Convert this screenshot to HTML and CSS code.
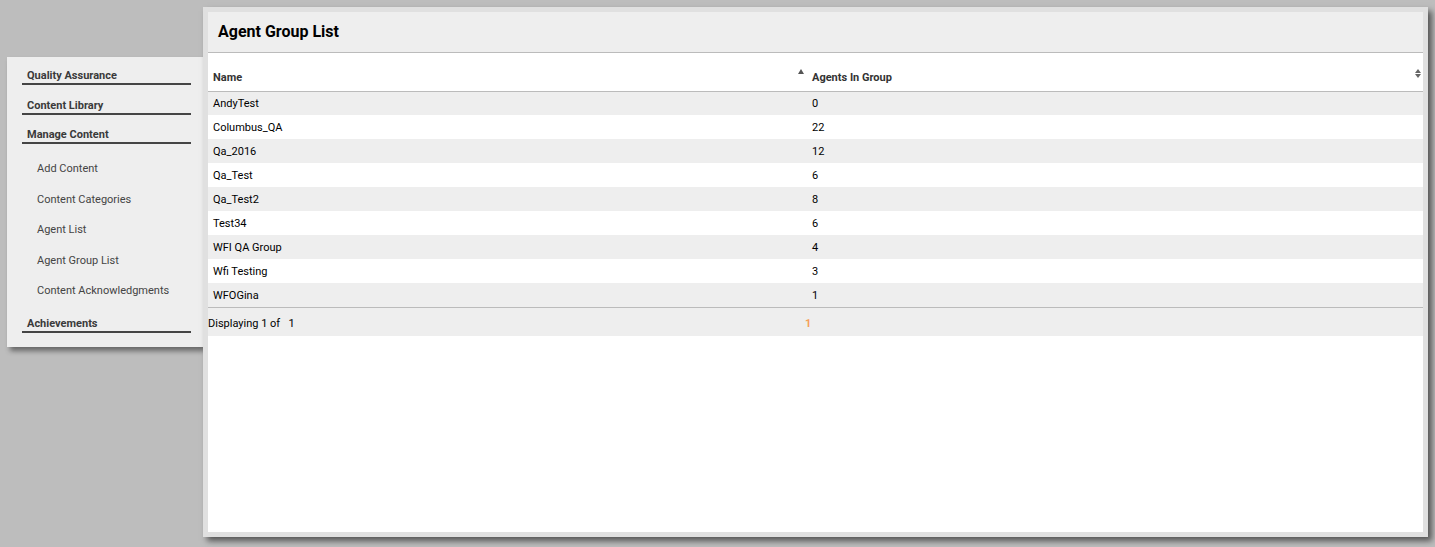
FILE: index.html
```html
<!DOCTYPE html>
<html lang="en">
<head>
    <meta charset="UTF-8">
    <title>Agent Group List</title>
    <link rel="stylesheet" href="styles.css">
</head>
<body>
    <div class="page">
        <!-- left menu -->
        <div class="sidebar">
            <div class="nav-head">Quality Assurance</div>
            <div class="nav-head">Content Library</div>
            <div class="nav-head">Manage Content</div>
            <div class="nav-items">
                <div class="nav-item">Add Content</div>
                <div class="nav-item">Content Categories</div>
                <div class="nav-item">Agent List</div>
                <div class="nav-item">Agent Group List</div>
                <div class="nav-item">Content Acknowledgments</div>
            </div>
            <div class="nav-head nav-last">Achievements</div>
        </div>

        <!-- main panel -->
        <div class="panel">
            <div class="panel-inner">
                <div class="panel-title">Agent Group List</div>
                <table class="grid">
                    <thead>
                        <tr>
                            <th class="col-name">Name<span class="sort-up"></span></th>
                            <th>Agents In Group<span class="sort-both"><i class="up"></i><i class="down"></i></span></th>
                        </tr>
                    </thead>
                    <tbody>
                        <tr><td>AndyTest</td><td>0</td></tr>
                        <tr><td>Columbus_QA</td><td>22</td></tr>
                        <tr><td>Qa_2016</td><td>12</td></tr>
                        <tr><td>Qa_Test</td><td>6</td></tr>
                        <tr><td>Qa_Test2</td><td>8</td></tr>
                        <tr><td>Test34</td><td>6</td></tr>
                        <tr><td>WFI QA Group</td><td>4</td></tr>
                        <tr><td>Wfi Testing</td><td>3</td></tr>
                        <tr><td>WFOGina</td><td>1</td></tr>
                    </tbody>
                </table>
                <div class="pager">
                    <div class="pager-info">Displaying 1 of &nbsp; 1</div>
                    <div class="pager-pages"><span class="page-current">1</span></div>
                </div>
            </div>
        </div>
    </div>
</body>
</html>
```

FILE: styles.css
```css
body {
    margin: 0;
    padding: 0;
    background-color: #bdbdbd;
    font-family: Roboto, "Liberation Sans", Arial, sans-serif;
    font-size: 11px;
    color: #000;
}
.page {
    display: flex;
    align-items: flex-start;
    height: 547px;
}
.sidebar {
    margin-left: 7px;
    margin-top: 57px;
    width: 196px;
    box-sizing: border-box;
    padding: 12px 12px 14px 15px;
    background-color: #eeeeee;
    box-shadow: 3px 4px 5px rgba(0, 0, 0, 0.45);
}
.nav-head {
    padding-left: 5px;
    line-height: 14px;
    font-weight: bold;
    color: #3a3a3a;
    border-bottom: 2px solid #444;
    margin-top: 13.5px;
}
.nav-head:first-child {
    margin-top: 0;
}
.nav-head.nav-last {
    margin-top: 10px;
}
.nav-items {
    padding-top: 10px;
}
.nav-item {
    padding-left: 15px;
    line-height: 30.5px;
    color: #444;
}
.panel {
    position: relative;
    z-index: 1;
    margin-top: 7px;
    width: 1225px;
    height: 530px;
    box-sizing: border-box;
    border: 5px solid #e0e0e0;
    background-color: #fff;
    box-shadow: 4px 4px 6px rgba(0, 0, 0, 0.55);
}
.panel-title {
    height: 40px;
    line-height: 40px;
    padding-left: 10px;
    background-color: #eeeeee;
    border-bottom: 1px solid #bbb;
    font-size: 16px;
    font-weight: bold;
    color: #000;
}
.grid {
    width: 100%;
    border-collapse: collapse;
    table-layout: fixed;
}
.grid th {
    position: relative;
    height: 38px;
    padding: 0 0 7px 5px;
    box-sizing: border-box;
    vertical-align: bottom;
    text-align: left;
    font-weight: bold;
    color: #333;
    border-bottom: 1px solid #bbb;
}
.grid .col-name {
    width: 599px;
}
.grid td {
    height: 24px;
    box-sizing: border-box;
    padding: 1px 0 0 5px;
    color: #000;
}
.grid tbody tr:nth-child(odd) td {
    background-color: #eeeeee;
}
.grid tbody tr:last-child td {
    border-bottom: 1px solid #bbb;
}
.sort-up {
    position: absolute;
    right: 3px;
    top: 16px;
    width: 0;
    height: 0;
    border-left: 3px solid transparent;
    border-right: 3px solid transparent;
    border-bottom: 5px solid #555;
}
.sort-both {
    position: absolute;
    right: 2px;
    top: 16px;
    width: 6px;
}
.sort-both i {
    display: block;
    width: 0;
    height: 0;
    border-left: 3px solid transparent;
    border-right: 3px solid transparent;
}
.sort-both .up {
    border-bottom: 4px solid #666;
    margin-bottom: 1px;
}
.sort-both .down {
    border-top: 4px solid #666;
}
.pager {
    display: flex;
    height: 28px;
    box-sizing: border-box;
    padding-top: 3px;
    align-items: center;
    background-color: #eeeeee;
}
.pager-info {
    width: 597px;
    color: #000;
}
.page-current {
    color: #f5a05a;
    font-weight: bold;
}
```
